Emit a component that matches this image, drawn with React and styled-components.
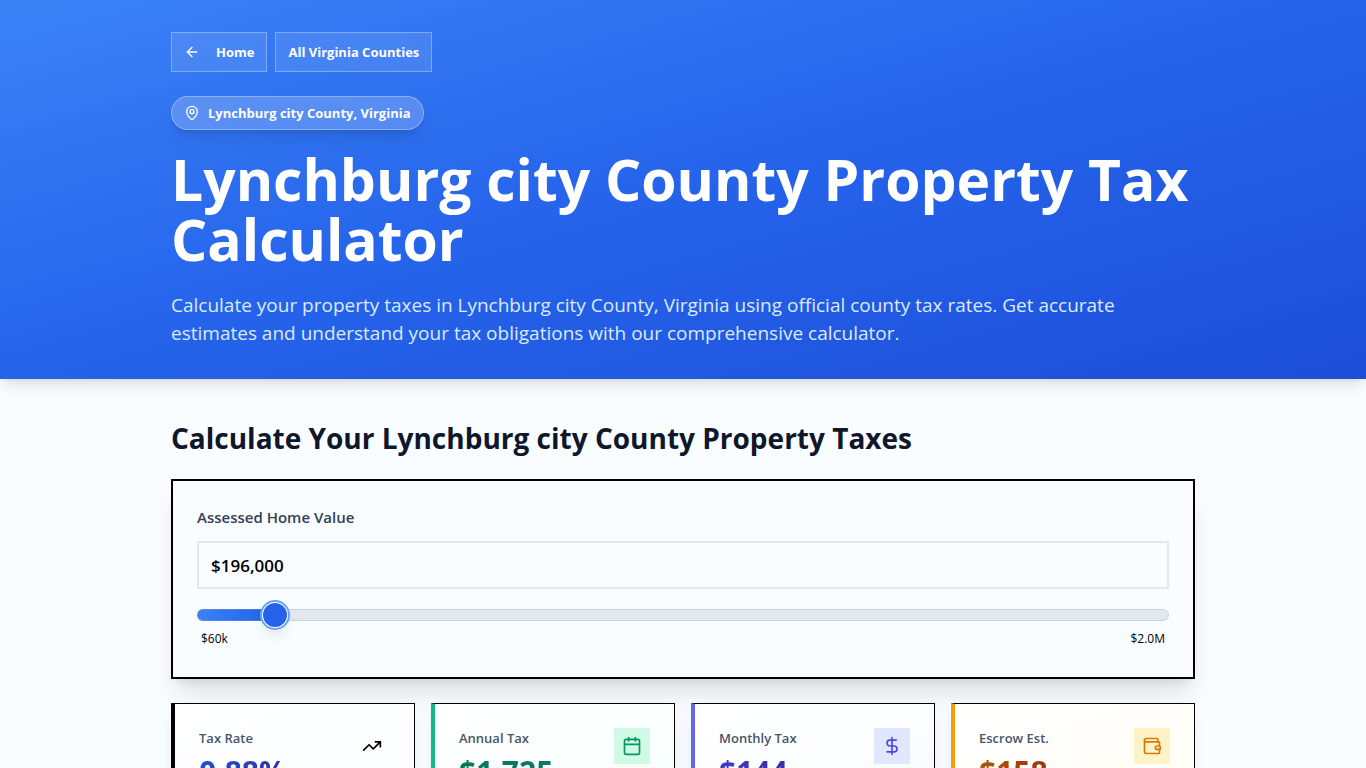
import React, { useState } from 'react'
import styled, { createGlobalStyle } from 'styled-components'
import { ArrowLeft, MapPin, TrendingUp, Calendar, DollarSign, Wallet } from 'lucide-react'

const MIN = 60000
const MAX = 2000000

const stats = [
    { label: 'Tax Rate', value: '0.88%', icon: TrendingUp, accent: '#000000', from: '#1d4ed8', to: '#3730a3', tint: '#f8fdff', box: 'transparent', ink: '#000000' },
    { label: 'Annual Tax', value: '$1,725', icon: Calendar, accent: '#10b981', from: '#047857', to: '#0f766e', tint: '#f5fefa', box: '#d1fae5', ink: '#059669' },
    { label: 'Monthly Tax', value: '$144', icon: DollarSign, accent: '#6366f1', from: '#4338ca', to: '#3730a3', tint: '#f7fbff', box: '#e0e7ff', ink: '#4f46e5' },
    { label: 'Escrow Est.', value: '$158', icon: Wallet, accent: '#f59e0b', from: '#b45309', to: '#9a3412', tint: '#fffdf4', box: '#fef3c7', ink: '#d97706' },
]

const StatCard = ({ item }) => {
    const Icon = item.icon
    return (
        <Card $accent={item.accent} $tint={item.tint}>
            <div>
                <CardLabel>{item.label}</CardLabel>
                <CardValue $from={item.from} $to={item.to}>{item.value}</CardValue>
            </div>
            <IconBox $box={item.box} $ink={item.ink}><Icon size={20} /></IconBox>
        </Card>
    )
}

export default function App() {
    const [value, setValue] = useState(196000)
    const percent = ((value - MIN) / (MAX - MIN)) * 100

    const onType = (e) => setValue(Number(e.target.value.replace(/\D/g, '')))

    return (
        <>
            <GlobalStyle />
            <Hero>
                <Container>
                    <Nav>
                        <NavLink href="#home"><ArrowLeft size={16} /><span>Home</span></NavLink>
                        <NavLink href="#counties">All Virginia Counties</NavLink>
                    </Nav>
                    <Badge><MapPin size={16} />Lynchburg city County, Virginia</Badge>
                    <Title>Lynchburg city County Property Tax Calculator</Title>
                    <Lead>
                        Calculate your property taxes in Lynchburg city County, Virginia using official county tax rates. Get accurate estimates and understand your tax obligations with our comprehensive calculator.
                    </Lead>
                </Container>
            </Hero>
            <Main>
                <Container>
                    <Heading>Calculate Your Lynchburg city County Property Taxes</Heading>
                    <Panel>
                        <Label htmlFor="home-value">Assessed Home Value</Label>
                        <ValueInput id="home-value" type="text" value={'$' + value.toLocaleString('en-US')} onChange={onType} />
                        <Slider
                            type="range"
                            aria-label="Home value slider"
                            min={MIN}
                            max={MAX}
                            step={1000}
                            value={value}
                            onChange={(e) => setValue(Number(e.target.value))}
                            style={{ '--fill': `${percent}%` }}
                        />
                        <Range><span>$60k</span><span>$2.0M</span></Range>
                    </Panel>
                    <Stats>
                        {stats.map((item) => <StatCard key={item.label} item={item} />)}
                    </Stats>
                </Container>
            </Main>
        </>
    )
}

const GlobalStyle = createGlobalStyle`
    *, *::before, *::after {
        box-sizing: border-box;
    }
    body {
        margin: 0;
        background: #fafdff;
        color: #000000;
        font-family: "Segoe UI", "Open Sans", "Noto Sans", sans-serif;
        font-size: 16px;
        line-height: 24px;
    }
    h1, h2, p {
        margin: 0;
    }
`

const Container = styled.div`
    max-width: 1024px;
    margin: 0 auto;
`

const Hero = styled.header`
    position: relative;
    padding: 32px 16px;
    color: #ffffff;
    background: linear-gradient(to bottom right, #3b82f6, #2563eb, #1d4ed8);
    box-shadow: 0 10px 15px -3px rgba(0, 0, 0, 0.1), 0 4px 6px -4px rgba(0, 0, 0, 0.1);
`

const Nav = styled.nav`
    display: flex;
    gap: 8px;
    margin-bottom: 24px;
`

const NavLink = styled.a`
    display: flex;
    align-items: center;
    gap: 16px;
    height: 40px;
    padding: 0 12px;
    border: 1px solid rgba(255, 255, 255, 0.3);
    background: rgba(255, 255, 255, 0.1);
    color: #ffffff;
    font-size: 13px;
    font-weight: 700;
    text-decoration: none;
`

const Badge = styled.div`
    display: flex;
    align-items: center;
    gap: 8px;
    width: fit-content;
    height: 34px;
    margin-bottom: 19px;
    padding: 0 12px;
    border: 1px solid rgba(255, 255, 255, 0.3);
    border-radius: 17px;
    background: rgba(255, 255, 255, 0.2);
    box-shadow: 0 10px 15px -3px rgba(0, 0, 0, 0.1), 0 4px 6px -4px rgba(0, 0, 0, 0.1);
    font-size: 13px;
    font-weight: 700;
`

const Title = styled.h1`
    margin-bottom: 22px;
    font-size: 57px;
    font-weight: 700;
    line-height: 60px;
`

const Lead = styled.p`
    max-width: 960px;
    color: #dbeafe;
    font-size: 19px;
    line-height: 28px;
`

const Main = styled.main`
    padding: 40px 16px;
`

const Heading = styled.h2`
    margin-bottom: 22px;
    color: #0f172a;
    font-size: 28px;
    font-weight: 700;
    line-height: 38px;
`

const Panel = styled.section`
    margin-bottom: 24px;
    padding: 24px 24px 30px;
    border: 2px solid #000000;
    box-shadow: 0 20px 25px -5px rgba(0, 0, 0, 0.1), 0 8px 10px -6px rgba(0, 0, 0, 0.1);
`

const Label = styled.label`
    display: block;
    margin-bottom: 12px;
    color: #334155;
    font-size: 15px;
    font-weight: 600;
`

const ValueInput = styled.input`
    display: block;
    width: 100%;
    height: 48px;
    padding: 0 12px;
    border: 2px solid #e2e8f0;
    background: transparent;
    color: #000000;
    font-family: inherit;
    font-size: 17px;
    font-weight: 600;
`

const Slider = styled.input`
    display: block;
    width: 100%;
    height: 12px;
    margin: 20px 0 10px;
    appearance: none;
    background: transparent;
    cursor: pointer;

    &::-webkit-slider-runnable-track {
        height: 12px;
        border-radius: 6px;
        background: linear-gradient(to right, #3b82f6, #2563eb) 0 0 / var(--fill) 100% no-repeat, #e2e8f0;
        box-shadow: inset 0 0 0 1px rgba(148, 163, 184, 0.3);
    }
    &::-webkit-slider-thumb {
        appearance: none;
        width: 24px;
        height: 24px;
        margin-top: -6px;
        border-radius: 50%;
        background: #2563eb;
        box-shadow: 0 0 0 1px #ffffff, 0 0 0 3px #6ba3f0, 0 10px 15px -3px rgba(0, 0, 0, 0.15);
    }
`

const Range = styled.div`
    display: flex;
    justify-content: space-between;
    padding: 0 4px;
    font-size: 12px;
    line-height: 16px;
`

const Stats = styled.div`
    display: grid;
    grid-template-columns: repeat(4, 1fr);
    gap: 16px;
`

const Card = styled.div`
    display: flex;
    justify-content: space-between;
    align-items: flex-start;
    padding: 24px;
    border: 1px solid #000000;
    border-left: 4px solid ${({ $accent }) => $accent};
    background: linear-gradient(to bottom right, #ffffff, ${({ $tint }) => $tint});
    box-shadow: 0 10px 15px -3px rgba(0, 0, 0, 0.1);
`

const CardLabel = styled.p`
    color: #475569;
    font-size: 13px;
    font-weight: 600;
    line-height: 20px;
`

const CardValue = styled.p`
    margin-top: 4px;
    color: transparent;
    background: linear-gradient(to right, ${({ $from, $to }) => `${$from}, ${$to}`});
    background-clip: text;
    font-size: 30px;
    font-weight: 700;
    line-height: 40px;
`

const IconBox = styled.div`
    display: flex;
    padding: 8px;
    background: ${({ $box }) => $box};
    color: ${({ $ink }) => $ink};
`
